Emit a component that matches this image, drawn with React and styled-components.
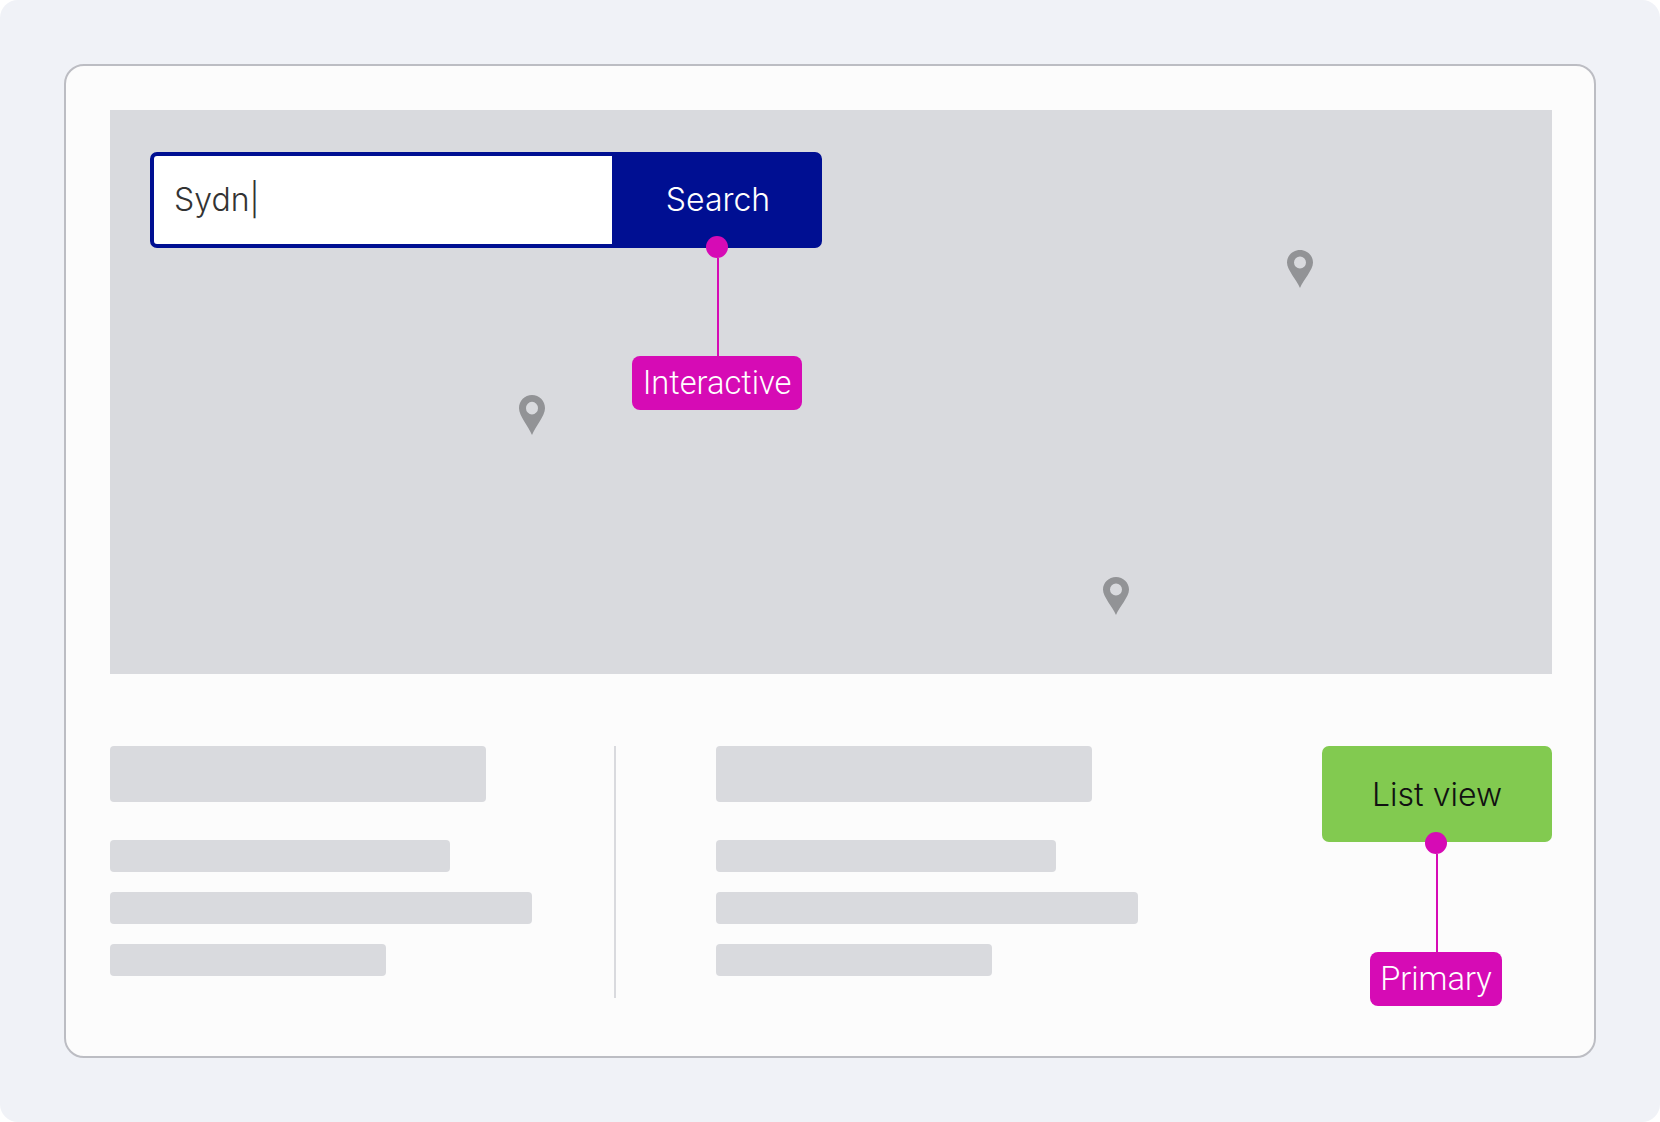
import React from "react";
import styled, { createGlobalStyle } from "styled-components";

const Global = createGlobalStyle`
  html, body { margin: 0; padding: 0; background: #ffffff; }
  * { box-sizing: border-box; }
`;

const Page = styled.div`
  width: 1660px;
  height: 1122px;
  padding: 64px;
  background: #f0f2f7;
  border-radius: 18px;
  font-family: "Inter", "Liberation Sans", sans-serif;
`;

const Card = styled.div`
  width: 1532px;
  height: 994px;
  padding: 44px 42px 0 44px;
  background: #fcfcfc;
  border: 2px solid #bcbdc3;
  border-radius: 20px;
`;

const MapArea = styled.div`
  position: relative;
  height: 564px;
  padding: 42px 40px;
  background: #d9dade;
`;

const SearchBar = styled.div`
  display: flex;
  width: 672px;
  height: 96px;
  border: 4px solid #000f92;
  border-radius: 7px;
  background: #000f92;
`;

const SearchInput = styled.div`
  display: flex;
  align-items: center;
  width: 458px;
  padding: 0 0 2px 20px;
  background: #ffffff;
  border-radius: 3px 0 0 3px;
  font-size: 32px;
  font-weight: 300;
  color: #333333;
`;

const SearchButton = styled.div`
  position: relative;
  flex: 1;
  display: flex;
  align-items: center;
  justify-content: center;
  padding: 0 0 2px 6px;
  font-size: 32px;
  font-weight: 300;
  color: #ffffff;
`;

const Callout = styled.div`
  position: absolute;
  left: ${(p) => p.$left}px;
  top: ${(p) => p.$top}px;
  display: flex;
  flex-direction: column;
  align-items: center;
`;

const Dot = styled.span`
  width: 22px;
  height: 22px;
  border-radius: 50%;
  background: #d60bb5;
`;

const Leader = styled.span`
  width: 2px;
  height: 98px;
  margin-left: 2px;
  background: #d60bb5;
`;

const Badge = styled.span`
  display: flex;
  align-items: center;
  justify-content: center;
  width: ${(p) => p.$width}px;
  height: 54px;
  background: #d60bb5;
  border-radius: 8px;
  color: #ffffff;
  font-family: "Roboto", "Liberation Sans", sans-serif;
  font-size: 32.6px;
`;

const PinWrap = styled.svg`
  position: absolute;
  left: ${(p) => p.$x}px;
  top: ${(p) => p.$y}px;
  width: 26px;
  height: ${(p) => p.$h}px;
`;

const Pin = ({ x, y, h = 38 }) => (
  <PinWrap $x={x} $y={y} $h={h} viewBox="0 0 26 38" preserveAspectRatio="none">
    <path
      fillRule="evenodd"
      fill="#929396"
      d="M13 0C5.8 0 0 5.6 0 12.5 0 20 9.5 29.5 13 38c3.500-8.500 13-18 13-25.500C26 5.600 20.200 0 13 0Zm0 6.500a6 6 0 1 1 0 12 6 6 0 0 1 0-12Z"
    />
  </PinWrap>
);

const Bottom = styled.div`
  display: flex;
  margin-top: 72px;
`;

const TextCol = styled.div`
  display: flex;
  flex-direction: column;
  gap: 20px;
  width: ${(p) => p.$width}px;
  height: 252px;
`;

const Divider = styled.div`
  width: 2px;
  height: 252px;
  margin-right: 100px;
  background: #d9dade;
`;

const Heading = styled.div`
  width: 376px;
  height: 56px;
  margin-bottom: 18px;
  background: #d9dade;
  border-radius: 4px;
`;

const Line = styled.div`
  width: ${(p) => p.$width}px;
  height: 32px;
  background: #d9dade;
  border-radius: 4px;
`;

const PrimaryButton = styled.div`
  position: relative;
  display: flex;
  align-items: center;
  justify-content: center;
  width: 230px;
  height: 96px;
  background: #82ca50;
  border-radius: 7px;
  color: #111111;
  font-size: 32px;
  font-weight: 300;
`;

const Skeleton = ({ width }) => (
  <TextCol $width={width}>
    <Heading />
    <Line $width={340} />
    <Line $width={422} />
    <Line $width={276} />
  </TextCol>
);

export default function App() {
  return (
    <>
      <Global />
      <Page>
        <Card>
          <MapArea>
            <SearchBar>
              <SearchInput>Sydn|</SearchInput>
              <SearchButton>
                Search
                <Callout $left={20} $top={80}>
                  <Dot />
                  <Leader />
                  <Badge $width={170}>Interactive</Badge>
                </Callout>
              </SearchButton>
            </SearchBar>
            <Pin x={409} y={285} h={40} />
            <Pin x={1177} y={140} />
            <Pin x={993} y={467} />
          </MapArea>
          <Bottom>
            <Skeleton width={504} />
            <Divider />
            <Skeleton width={606} />
            <PrimaryButton>
              List view
              <Callout $left={48} $top={86}>
                <Dot />
                <Leader />
                <Badge $width={132}>Primary</Badge>
              </Callout>
            </PrimaryButton>
          </Bottom>
        </Card>
      </Page>
    </>
  );
}
